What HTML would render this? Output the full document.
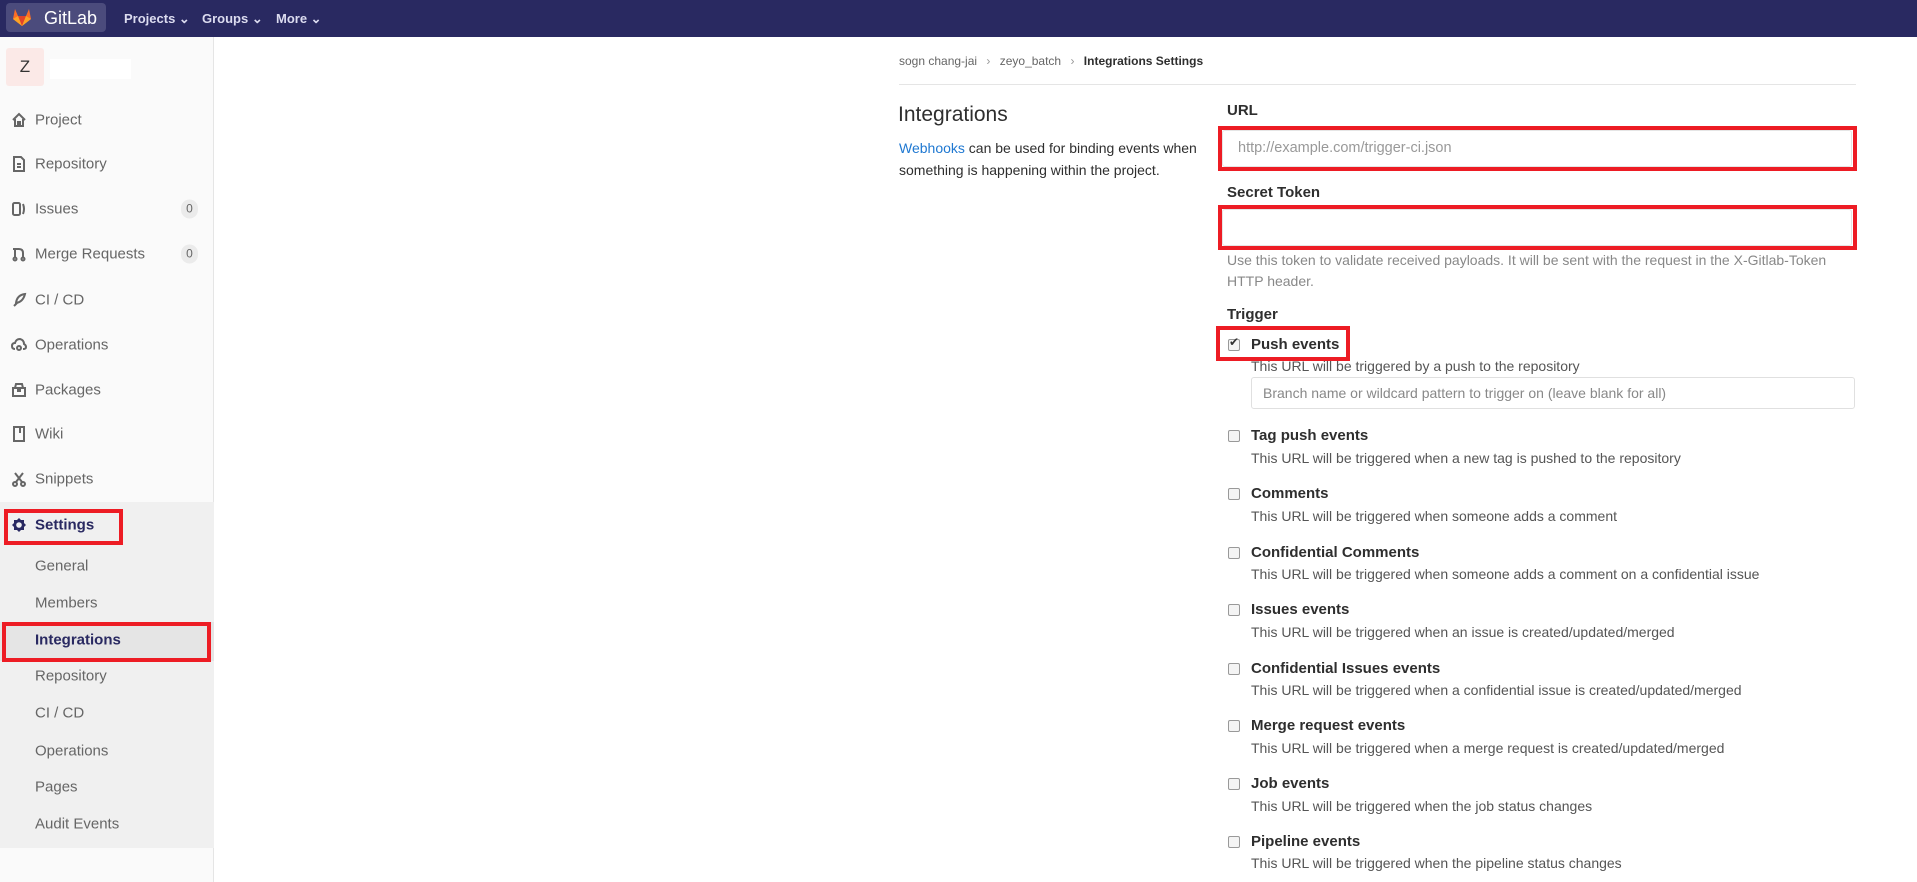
<!DOCTYPE html>
<html><head><meta charset="utf-8"><style>
*{margin:0;padding:0;box-sizing:border-box}
body{width:1917px;height:882px;overflow:hidden;font-family:"Liberation Sans",sans-serif;background:#fff;position:relative;color:#2e2e2e}
.a{position:absolute;white-space:nowrap}
.hdr{left:0;top:0;width:1917px;height:37px;background:#292961}
.side{left:0;top:37px;width:214px;height:845px;background:#fafafa;border-right:1px solid #e5e5e5}
.si{position:absolute;left:35px;font-size:15px;color:#666;transform:translateY(-50%);white-space:nowrap}
.ic{position:absolute;left:11px;transform:translateY(-50%)}
.badge{position:absolute;left:181px;width:17px;height:19px;border-radius:9px;background:#ebebeb;color:#666;font-size:12px;text-align:center;line-height:19px;transform:translateY(-50%)}
.red{position:absolute;border:4px solid #ed1c24}
.lbl{font-size:15px;font-weight:bold;color:#2e2e2e}
.desc{font-size:14px;color:#555}
.cb{position:absolute;width:12px;height:12px;border:1px solid #999;border-radius:2px;background:#f4f4f4;left:1228px}
</style></head><body>
<div class="a hdr"></div>
<div class="a" style="left:6px;top:3px;width:100px;height:29px;background:#4b4b7c;border-radius:4px"></div>
<svg class="a" style="left:11px;top:6px" width="22" height="22" viewBox="0 0 22 22"><path d="M11 20L2 13 4 3 7 10H15L18 3 20 13Z" fill="#fc6d26"/><path d="M11 20L7 10H15Z" fill="#e24329"/><path d="M11 20L2 13 7 10Z" fill="#fca326"/><path d="M11 20L20 13 15 10Z" fill="#fca326"/></svg>
<div class="a" style="left:44px;top:8px;color:#fff;font-size:18px">GitLab</div>
<div class="a" style="left:124px;top:11px;color:#dcdcf0;font-size:13px;font-weight:bold">Projects ⌄</div>
<div class="a" style="left:202px;top:11px;color:#dcdcf0;font-size:13px;font-weight:bold">Groups ⌄</div>
<div class="a" style="left:276px;top:11px;color:#dcdcf0;font-size:13px;font-weight:bold">More ⌄</div>

<div class="a side"></div>
<div class="a" style="left:6px;top:48px;width:38px;height:38px;background:#fbe9e7;border-radius:3px;text-align:center;line-height:38px;font-size:17px;color:#333">Z</div>
<div class="a" style="left:50px;top:59px;width:81px;height:20px;background:#fff"></div>
<div class="a" style="left:0;top:502px;width:214px;height:346px;background:#f0f0f0"></div>
<div class="a" style="left:0;top:622px;width:214px;height:39px;background:#e5e5e5"></div>

<svg class="ic" style="top:120px" width="16" height="16" viewBox="0 0 16 16" fill="none" stroke="#666" stroke-width="2"><path d="M2 8L8 2 14 8M4 7V14H12V7M7 14V10H9V14"/></svg><div class="si" style="top:120px">Project</div>
<svg class="ic" style="top:164px" width="16" height="16" viewBox="0 0 16 16" fill="none" stroke="#666" stroke-width="2"><path d="M3 1H10L13 4V15H3ZM6 8H10M6 11H10"/></svg><div class="si" style="top:164px">Repository</div>
<svg class="ic" style="top:209px" width="16" height="16" viewBox="0 0 16 16" fill="none" stroke="#666" stroke-width="2"><rect x="2" y="2" width="7" height="12" rx="1.5"/><path d="M12 3Q14 8 12 13"/></svg><div class="si" style="top:209px">Issues</div><div class="badge" style="top:209px">0</div>
<svg class="ic" style="top:254px" width="16" height="16" viewBox="0 0 16 16" fill="none" stroke="#666" stroke-width="2"><circle cx="4" cy="13" r="1.5"/><circle cx="12" cy="13" r="1.5"/><path d="M4 11V2M2 3H8Q12 3 12 7V11"/></svg><div class="si" style="top:254px">Merge Requests</div><div class="badge" style="top:254px">0</div>
<svg class="ic" style="top:300px" width="16" height="16" viewBox="0 0 16 16" fill="none" stroke="#666" stroke-width="2"><path d="M3 14L7 10M14 2Q6 3 5 11Q12 10 14 2Z"/></svg><div class="si" style="top:300px">CI / CD</div>
<svg class="ic" style="top:345px" width="16" height="16" viewBox="0 0 16 16" fill="none" stroke="#666" stroke-width="2"><path d="M4 12Q1 12 1 9Q1 6 4 6Q5 2 9 2Q13 3 13 7Q15 8 15 10Q15 12 12 12"/><circle cx="8" cy="11" r="2"/></svg><div class="si" style="top:345px">Operations</div>
<svg class="ic" style="top:390px" width="16" height="16" viewBox="0 0 16 16" fill="none" stroke="#666" stroke-width="2"><path d="M2 6H14V14H2ZM4 6L5 2H11L12 6M7 6V9H9V6"/></svg><div class="si" style="top:390px">Packages</div>
<svg class="ic" style="top:434px" width="16" height="16" viewBox="0 0 16 16" fill="none" stroke="#666" stroke-width="2"><path d="M3 1H13V15H3ZM9 1V7"/></svg><div class="si" style="top:434px">Wiki</div>
<svg class="ic" style="top:479px" width="16" height="16" viewBox="0 0 16 16" fill="none" stroke="#666" stroke-width="2"><circle cx="4" cy="13" r="2"/><circle cx="12" cy="13" r="2"/><path d="M5 11L12 2M11 11L4 2"/></svg><div class="si" style="top:479px">Snippets</div>
<svg class="ic" style="top:525px" width="16" height="16" viewBox="0 0 16 16"><path d="M8 1L10 3 13 3 13 6 15 8 13 10 13 13 10 13 8 15 6 13 3 13 3 10 1 8 3 6 3 3 6 3Z" fill="#292961"/><circle cx="8" cy="8" r="2.8" fill="#f0f0f0"/></svg><div class="si" style="top:525px;color:#292961;font-weight:bold">Settings</div>
<div class="si" style="top:566px">General</div>
<div class="si" style="top:603px">Members</div>
<div class="si" style="top:640px;color:#292961;font-weight:bold">Integrations</div>
<div class="si" style="top:676px">Repository</div>
<div class="si" style="top:713px">CI / CD</div>
<div class="si" style="top:751px">Operations</div>
<div class="si" style="top:787px">Pages</div>
<div class="si" style="top:824px">Audit Events</div>
<div class="red" style="left:4px;top:509px;width:119px;height:36px"></div>
<div class="red" style="left:2px;top:622px;width:209px;height:40px"></div>

<div class="a" style="left:899px;top:54px;font-size:12px;color:#666">sogn chang-jai <span style="color:#999;margin:0 6px">›</span> zeyo_batch <span style="color:#999;margin:0 6px">›</span> <span style="color:#2e2e2e;font-weight:bold">Integrations Settings</span></div>
<div class="a" style="left:899px;top:84px;width:957px;height:1px;background:#e5e5e5"></div>
<div class="a" style="left:898px;top:103px;font-size:21px;color:#2e2e2e">Integrations</div>
<div class="a" style="left:899px;top:137px;font-size:14px;line-height:22px;color:#2e2e2e"><span style="color:#1f78d1">Webhooks</span> can be used for binding events when<br>something is happening within the project.</div>

<div class="a lbl" style="left:1227px;top:102px">URL</div>
<div class="a" style="left:1222px;top:130px;width:630px;height:37px;border:1px solid #e5e5e5;border-radius:3px"></div>
<div class="a" style="left:1238px;top:140px;font-size:14.5px;color:#999">http://example.com/trigger-ci.json</div>
<div class="red" style="left:1218px;top:126px;width:639px;height:45px"></div>
<div class="a lbl" style="left:1227px;top:184px">Secret Token</div>
<div class="a" style="left:1222px;top:209px;width:630px;height:37px;border:1px solid #e5e5e5;border-radius:3px"></div>
<div class="red" style="left:1218px;top:205px;width:639px;height:45px"></div>
<div class="a" style="left:1227px;top:250px;font-size:14px;line-height:21px;color:#888">Use this token to validate received payloads. It will be sent with the request in the X-Gitlab-Token<br>HTTP header.</div>
<div class="a lbl" style="left:1227px;top:306px">Trigger</div>

<div class="cb" style="top:339px"></div><div class="a" style="left:1229px;top:335px;font-size:12px;color:#333">✔</div>
<div class="a lbl" style="left:1251px;top:336px">Push events</div>
<div class="red" style="left:1216px;top:326px;width:134px;height:35px"></div>
<div class="a desc" style="left:1251px;top:358px">This URL will be triggered by a push to the repository</div>
<div class="a" style="left:1251px;top:377px;width:604px;height:32px;border:1px solid #e0e0e0;border-radius:3px"></div>
<div class="a" style="left:1263px;top:385px;font-size:14px;color:#888">Branch name or wildcard pattern to trigger on (leave blank for all)</div>

<div class="cb" style="top:430px"></div><div class="a lbl" style="left:1251px;top:427px">Tag push events</div><div class="a desc" style="left:1251px;top:450px">This URL will be triggered when a new tag is pushed to the repository</div>
<div class="cb" style="top:488px"></div><div class="a lbl" style="left:1251px;top:485px">Comments</div><div class="a desc" style="left:1251px;top:508px">This URL will be triggered when someone adds a comment</div>
<div class="cb" style="top:547px"></div><div class="a lbl" style="left:1251px;top:544px">Confidential Comments</div><div class="a desc" style="left:1251px;top:566px">This URL will be triggered when someone adds a comment on a confidential issue</div>
<div class="cb" style="top:604px"></div><div class="a lbl" style="left:1251px;top:601px">Issues events</div><div class="a desc" style="left:1251px;top:624px">This URL will be triggered when an issue is created/updated/merged</div>
<div class="cb" style="top:663px"></div><div class="a lbl" style="left:1251px;top:660px">Confidential Issues events</div><div class="a desc" style="left:1251px;top:682px">This URL will be triggered when a confidential issue is created/updated/merged</div>
<div class="cb" style="top:720px"></div><div class="a lbl" style="left:1251px;top:717px">Merge request events</div><div class="a desc" style="left:1251px;top:740px">This URL will be triggered when a merge request is created/updated/merged</div>
<div class="cb" style="top:778px"></div><div class="a lbl" style="left:1251px;top:775px">Job events</div><div class="a desc" style="left:1251px;top:798px">This URL will be triggered when the job status changes</div>
<div class="cb" style="top:836px"></div><div class="a lbl" style="left:1251px;top:833px">Pipeline events</div><div class="a desc" style="left:1251px;top:855px">This URL will be triggered when the pipeline status changes</div>
</body></html>
